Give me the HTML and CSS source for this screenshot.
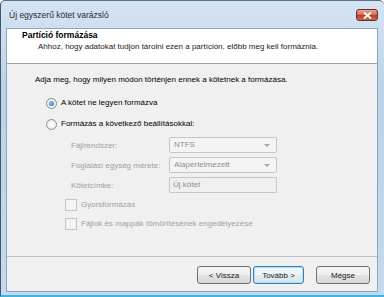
FILE: index.html
```html
<!DOCTYPE html>
<html lang="hu">
<head>
  <meta charset="UTF-8">
  <title>Új egyszerű kötet varázsló</title>
  <link rel="stylesheet" href="styles.css">
</head>
<body>

<div class="window">
  <!-- címsor -->
  <div class="titlebar">
    <span class="title">Új egyszerű kötet varázsló</span>
    <span class="close-btn">
      <svg width="9" height="7" viewBox="0 0 9 7"><path d="M1 0.5 L8 6.5 M8 0.5 L1 6.5" stroke="#fff" stroke-width="1.8"/></svg>
    </span>
  </div>

  <div class="client">
    <div class="header">
      <div class="header-title">Partíció formázása</div>
      <div class="header-sub">Ahhoz, hogy adatokat tudjon tárolni ezen a partíción, előbb meg kell formáznia.</div>
    </div>

    <div class="content">
      <div class="intro">Adja meg, hogy milyen módon történjen ennek a kötetnek a formázása.</div>

      <label class="radio-row first">
        <span class="radio checked"></span>A kötet ne legyen formázva
      </label>
      <label class="radio-row">
        <span class="radio"></span>Formázás a következő beállításokkal:
      </label>

      <div class="settings">
        <div class="setting-row">
          <span class="setting-label">Fájlrendszer:</span>
          <span class="combo">NTFS<span class="arrow"></span></span>
        </div>
        <div class="setting-row">
          <span class="setting-label">Foglalási egység mérete:</span>
          <span class="combo">Alapértelmezett<span class="arrow"></span></span>
        </div>
        <div class="setting-row">
          <span class="setting-label">Kötetcímke:</span>
          <span class="combo textbox">Új kötet</span>
        </div>
      </div>

      <label class="check-row first">
        <span class="checkbox"></span>Gyorsformázás
      </label>
      <label class="check-row">
        <span class="checkbox"></span>Fájlok és mappák tömörítésének engedélyezése
      </label>
    </div>

    <div class="footer">
      <button class="btn">&lt; Vissza</button>
      <button class="btn default">Tovább &gt;</button>
      <button class="btn cancel">Mégse</button>
    </div>
  </div>
</div>

</body>
</html>
```

FILE: styles.css
```css
body {
  margin: 0;
  padding: 0;
  font-family: "Liberation Sans", Arial, sans-serif;
  font-size: 8px;
  color: #000;
}

.window {
  width: 384px;
  height: 297px;
  box-sizing: border-box;
  border-left: 1px solid #45566b;
  border-top: 1px solid #5d6f86;
  border-bottom: 2px solid #35b8e4;
  border-radius: 5px 5px 0 0;
  background: linear-gradient(#d5e4f3, #bcd2ea 30%, #c6d9ee);
  display: flex;
  flex-direction: column;
  padding: 0 6px 3px 5px;
}

/* === címsor === */
.titlebar {
  height: 27px;
  display: flex;
  align-items: flex-start;
  justify-content: space-between;
}
.title {
  font-family: "Liberation Sans", Arial, sans-serif;
  font-size: 8.5px;
  color: #1e2b3c;
  margin: 9px 0 0 3px;
}
.close-btn {
  width: 20px;
  height: 10px;
  margin-top: 8px;
  border: 1px solid #6b2d25;
  border-radius: 3px;
  background: linear-gradient(#e8a593, #cf664f 50%, #b8412a 55%, #c9694f);
  display: flex;
  align-items: center;
  justify-content: center;
}

/* === kliens terület === */
.client {
  flex: 1;
  background: #f0f0f0;
  border: 1px solid #8fa4bd;
  display: flex;
  flex-direction: column;
}

.header {
  height: 35px;
  background: #fff;
  border-bottom: 1px solid #a0a0a0;
  box-sizing: border-box;
  padding: 1px 0 0 15px;
}
.header-title {
  font-weight: bold;
  font-size: 8.5px;
  line-height: 10px;
}
.header-sub {
  line-height: 10px;
  margin: 2px 0 0 16px;
  color: #1a1a1a;
}

.content {
  flex: 1;
  padding-left: 28px;
}
.intro {
  line-height: 12px;
  margin-top: 10px;
}

.radio-row,
.check-row {
  display: flex;
  align-items: center;
  height: 12px;
  line-height: 12px;
  gap: 4px;
}
.radio-row {
  margin: 9px 0 0 11px;
}
.radio-row.first {
  margin-top: 11px;
}
.radio {
  width: 9px;
  height: 9px;
  border: 1px solid #8e8f8f;
  border-radius: 50%;
  background: radial-gradient(#f8f8f8 40%, #dcdcdc);
  position: relative;
}
.radio.checked::after {
  content: '';
  position: absolute;
  left: 2px; top: 2px;
  width: 5px; height: 5px;
  border-radius: 50%;
  background: radial-gradient(circle at 40% 35%, #7ec4f0, #1c65b0);
}

.settings {
  margin-top: 7px;
  padding-left: 36px;
  display: flex;
  flex-direction: column;
  gap: 4px;
}
.setting-row {
  display: flex;
  align-items: center;
  height: 16px;
  color: #a0a0a0;
}
.setting-label {
  width: 98px;
}
.combo {
  width: 108px;
  height: 16px;
  box-sizing: border-box;
  border: 1px solid #c5c5c5;
  border-radius: 2px;
  background: #f4f4f4;
  color: #8d8d8d;
  padding-left: 4px;
  line-height: 14px;
  position: relative;
}
.combo .arrow {
  position: absolute;
  right: 6px;
  top: 6px;
  border-left: 3px solid transparent;
  border-right: 3px solid transparent;
  border-top: 3px solid #a8a8a8;
}
.textbox {
  border-radius: 1px;
  background: #f0f0f0;
  padding-left: 3px;
}

.check-row {
  margin: 6px 0 0 30px;
  color: #a0a0a0;
}
.check-row + .check-row {
  margin-top: 7px;
}
.checkbox {
  width: 10px;
  height: 10px;
  border: 1px solid #c4c4c4;
  background: #f4f4f4;
}

/* === gombok === */
.footer {
  height: 35px;
  box-sizing: border-box;
  border-top: 1px solid #c0c0c0;
  display: flex;
  justify-content: flex-end;
  align-items: flex-start;
  padding: 9px 7px 0 0;
  gap: 2px;
}
.btn {
  font-family: "Liberation Sans", Arial, sans-serif;
  font-size: 8px;
  width: 54px;
  height: 18px;
  padding: 0;
  border: 1px solid #707070;
  border-radius: 3px;
  background: linear-gradient(#f6f6f6, #eeeeee 50%, #e3e3e3 50%, #d8d8d8);
  color: #222;
}
.btn.default {
  border-color: #3c7fb1;
  box-shadow: inset 0 0 0 1px #a9dcf6;
  background: linear-gradient(#f4f8fb, #edf3f8 50%, #e2ebf2 50%, #d9e4ed);
  width: 51px;
}
.btn.cancel {
  margin-left: 10px;
}
```
